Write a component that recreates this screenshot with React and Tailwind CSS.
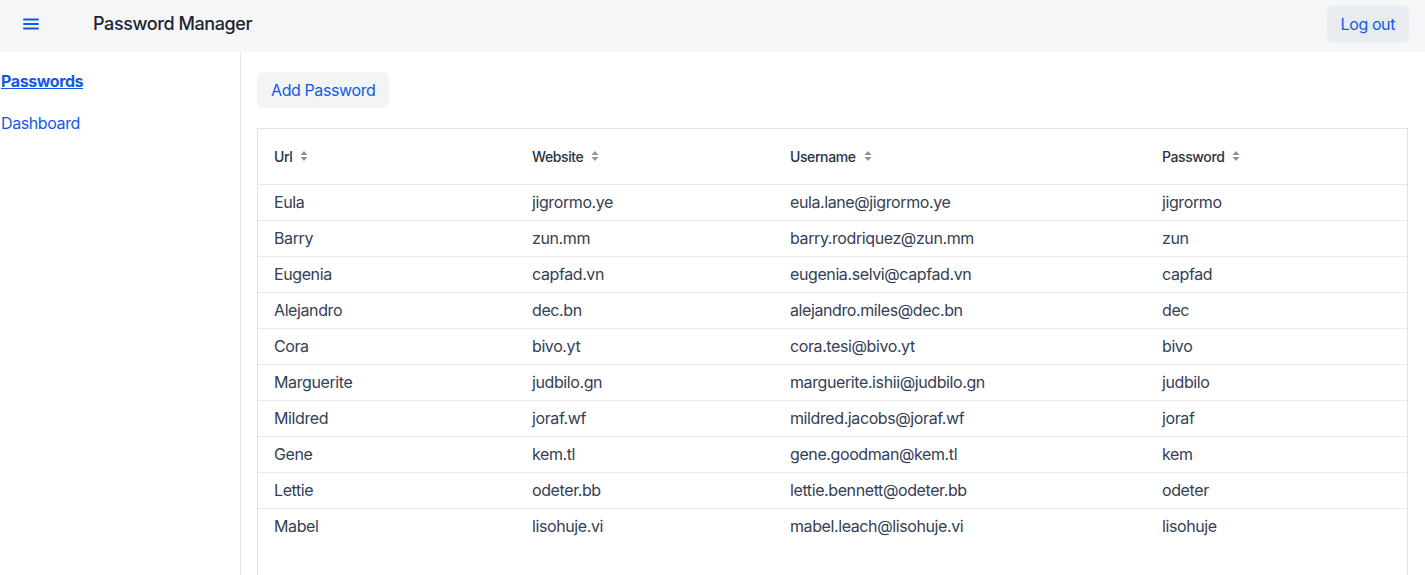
import React from "react";

const rows = [
  ["Eula", "jigrormo.ye", "eula.lane@jigrormo.ye", "jigrormo"],
  ["Barry", "zun.mm", "barry.rodriquez@zun.mm", "zun"],
  ["Eugenia", "capfad.vn", "eugenia.selvi@capfad.vn", "capfad"],
  ["Alejandro", "dec.bn", "alejandro.miles@dec.bn", "dec"],
  ["Cora", "bivo.yt", "cora.tesi@bivo.yt", "bivo"],
  ["Marguerite", "judbilo.gn", "marguerite.ishii@judbilo.gn", "judbilo"],
  ["Mildred", "joraf.wf", "mildred.jacobs@joraf.wf", "joraf"],
  ["Gene", "kem.tl", "gene.goodman@kem.tl", "kem"],
  ["Lettie", "odeter.bb", "lettie.bennett@odeter.bb", "odeter"],
  ["Mabel", "lisohuje.vi", "mabel.leach@lisohuje.vi", "lisohuje"],
];

const SortIcon = () => (
  <svg width="8" height="12" viewBox="0 0 8 12" className="ml-2 text-[#8a94a6]">
    <path d="M4 1 L7.5 5 H0.5 Z" fill="currentColor" />
    <path d="M4 11 L7.5 7 H0.5 Z" fill="currentColor" />
  </svg>
);

const columns = [
  { label: "Url", w: "w-[258px]" },
  { label: "Website", w: "w-[258px]" },
  { label: "Username", w: "w-[372px]" },
  { label: "Password", w: "" },
];

export default function App() {
  return (
    <div className="min-h-screen bg-white font-['Inter',sans-serif] tracking-[-0.025em] text-[#344054]">
      <header className="h-[52px] bg-[#f5f6f8] flex items-start justify-between pl-[22px] pr-4 pt-[6px]">
        <div className="flex items-center h-9">
          <svg width="18" height="14" viewBox="0 0 18 14" className="text-[#0f5be6] -mt-[1px]">
            <rect x="1" y="1.5" width="16" height="2" rx="1" fill="currentColor" />
            <rect x="1" y="6" width="16" height="2" rx="1" fill="currentColor" />
            <rect x="1" y="10.5" width="16" height="2" rx="1" fill="currentColor" />
          </svg>
          <span className="ml-[53px] -mt-[2px] text-[18px] font-medium text-[#1d2433]">Password Manager</span>
        </div>
        <button className="h-9 px-[14px] rounded-md bg-[#e8ebef] text-[16px] text-[#0f5be6]">Log out</button>
      </header>
      <div className="flex">
        <aside className="w-[241px] shrink-0 border-r border-[#e3e6ea] min-h-[523px] pt-[19px]">
          <a href="#" className="block pl-[1px] text-[16px] font-bold text-[#0f5be6] underline leading-[20px]">Passwords</a>
          <a href="#" className="block pl-[1px] mt-[22px] text-[16px] text-[#0f5be6] leading-[20px]">Dashboard</a>
        </aside>
        <main className="flex-1 pl-4 pr-[17px] pt-5">
          <button className="h-9 px-[14px] rounded-md bg-[#f3f4f6] text-[16px] text-[#0f5be6]">Add Password</button>
          <div className="mt-5 border border-[#dfe2e7] min-h-[460px]">
            <table className="w-full border-collapse text-left">
              <thead>
                <tr className="h-[55px] border-b border-[#e5e7eb]">
                  {columns.map((c) => (
                    <th key={c.label} className={`${c.w} pl-4 text-[14px] font-medium text-[#2a3242]`}>
                      <span className="inline-flex items-center">
                        {c.label}
                        <SortIcon />
                      </span>
                    </th>
                  ))}
                </tr>
              </thead>
              <tbody>
                {rows.map((r, i) => (
                  <tr key={i} className={`h-9 ${i < rows.length - 1 ? "border-b border-[#e8eaee]" : ""}`}>
                    {r.map((v, j) => (
                      <td key={j} className="pl-4 text-[16px] text-[#344054]">{v}</td>
                    ))}
                  </tr>
                ))}
              </tbody>
            </table>
          </div>
        </main>
      </div>
    </div>
  );
}
